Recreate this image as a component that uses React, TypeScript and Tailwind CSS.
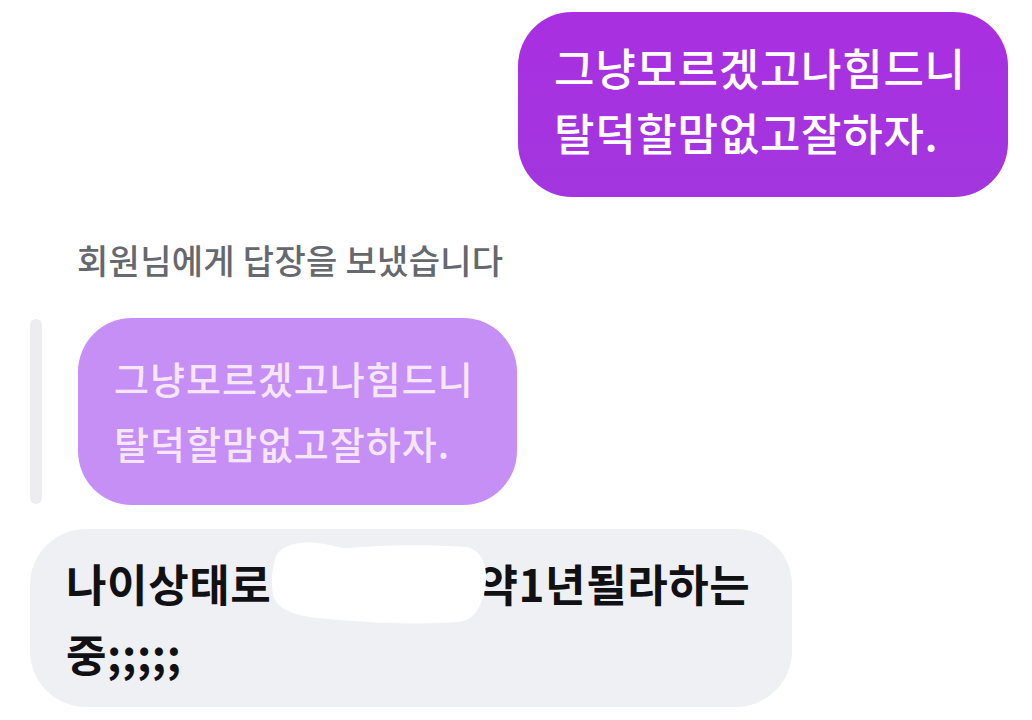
const KR = { fontFamily: '"Noto Sans CJK KR", "Noto Sans", sans-serif' }

function Redaction() {
  // 지운 부분 (흰색 낙서)
  return (
    <svg
      className="absolute left-[-2px] top-[-22px]"
      width="220"
      height="88"
      viewBox="0 0 220 88"
    >
      <path
        d="M6 20 C10 6 30 2 48 4 C62 5 70 10 80 9 C110 6 160 5 196 8 C214 10 220 30 216 50 C212 70 204 82 188 83 C150 86 100 84 60 80 C30 78 8 72 4 56 C2 44 3 30 6 20 Z"
        fill="#ffffff"
      />
    </svg>
  )
}

export default function App() {
  return (
    <div className="w-[1032px] h-[720px] bg-white overflow-hidden flex flex-col" style={KR}>
      {/* 보낸 메시지 */}
      <div className="flex justify-end pt-[12px] pr-[24px]">
        <div className="w-[490px] h-[185px] rounded-[54px] bg-gradient-to-b from-[#a92fe1] to-[#a236de] pl-[36px] pb-[10px] flex flex-col justify-center text-white text-[44px] font-medium leading-[65px] tracking-[0.7px]">
          <span className="whitespace-nowrap">그냥모르겠고나힘드니</span>
          <span className="whitespace-nowrap">탈덕할맘없고잘하자.</span>
        </div>
      </div>

      {/* 답장 라벨 */}
      <div className="pl-[77px] mt-[43px] h-[40px] text-[34px] font-medium leading-[40px] text-[#65686e] tracking-[0.3px] whitespace-nowrap">
        회원님에게 답장을 보냈습니다
      </div>

      {/* 인용된 메시지 */}
      <div className="flex items-center mt-[38px] pl-[30px]">
        <div className="w-[12px] h-[185px] rounded-full bg-[#ededf1]" />
        <div className="ml-[36px] w-[439px] h-[187px] rounded-[54px] bg-[#c68ff5] pl-[36px] pb-[4px] flex flex-col justify-center text-[#f6e6fb] text-[38px] font-medium leading-[65px] tracking-[1px]">
          <span className="whitespace-nowrap">그냥모르겠고나힘드니</span>
          <span className="whitespace-nowrap">탈덕할맘없고잘하자.</span>
        </div>
      </div>

      {/* 받은 메시지 */}
      <div className="mt-[24px] ml-[30px] w-[762px] h-[178px] rounded-[56px] bg-[#eff0f4] pl-[36px] flex flex-col justify-center text-[#111114] text-[44px] font-bold leading-[70px] tracking-[0.6px]">
        <div className="flex items-center whitespace-nowrap">
          <span>나이상태로</span>
          <span className="relative w-[206px] h-[44px]">
            <Redaction />
          </span>
          <span>약1년될라하는</span>
        </div>
        <div className="whitespace-nowrap">중;;;;;</div>
      </div>
    </div>
  )
}
